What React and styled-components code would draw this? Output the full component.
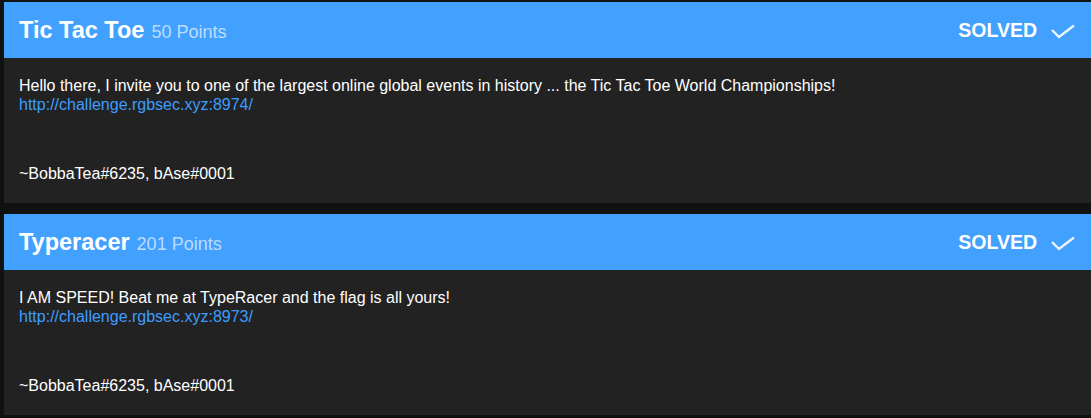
import React from 'react';
import styled, { createGlobalStyle } from 'styled-components';

const GlobalStyle = createGlobalStyle`
	body {
		margin: 0;
		background: #111111;
		font-family: "Liberation Sans", Arial, Helvetica, sans-serif;
	}
`;

const challenges = [
	{
		name: 'Tic Tac Toe',
		points: 50,
		description:
			'Hello there, I invite you to one of the largest online global events in history ... the Tic Tac Toe World Championships!',
		link: 'http://challenge.rgbsec.xyz:8974/',
		author: '~BobbaTea#6235, bAse#0001',
	},
	{
		name: 'Typeracer',
		points: 201,
		description: 'I AM SPEED! Beat me at TypeRacer and the flag is all yours!',
		link: 'http://challenge.rgbsec.xyz:8973/',
		author: '~BobbaTea#6235, bAse#0001',
	},
];

const Check = () => (
	<svg width="24" height="15" viewBox="0 0 24 15" fill="none">
		<polyline
			points="1,6 8,13 23,1.5"
			stroke="rgba(255,255,255,0.9)"
			strokeWidth="2.4"
			strokeLinejoin="miter"
		/>
	</svg>
);

const Challenge = ({ item }) => (
	<Card>
		<Header>
			<Title>
				{item.name}
				<Points>{item.points} Points</Points>
			</Title>
			<Status>
				SOLVED
				<Check />
			</Status>
		</Header>
		<Body>
			<Description>
				{item.description}
				<br />
				<a href={item.link}>{item.link}</a>
			</Description>
			<Author>{item.author}</Author>
		</Body>
	</Card>
);

const App = () => (
	<Page>
		<GlobalStyle />
		{challenges.map((c) => (
			<Challenge key={c.name} item={c} />
		))}
	</Page>
);

const Page = styled.div`
	display: flex;
	flex-direction: column;
	gap: 11px;
	padding: 2px 0 0 4px;
`;

const Card = styled.div`
	background: #222222;
`;

const Header = styled.div`
	display: flex;
	align-items: center;
	justify-content: space-between;
	height: 56px;
	padding: 0 16px 0 15px;
	background: #42a1ff;
	color: #fff;
`;

const Title = styled.h2`
	margin: 0;
	font-size: 23.5px;
	font-weight: 700;
`;

const Points = styled.span`
	margin-left: 7px;
	font-size: 18px;
	font-weight: 400;
	color: rgba(255, 255, 255, 0.65);
`;

const Status = styled.div`
	display: flex;
	align-items: center;
	gap: 14px;
	font-size: 19.5px;
	font-weight: 700;
	svg {
		margin-top: 2px;
	}
`;

const Body = styled.div`
	padding: 18px 15px 20px;
	color: #fff;
	font-size: 16px;
	line-height: 19px;
`;

const Description = styled.p`
	margin: 0;
	a {
		color: #3d9dff;
		text-decoration: none;
	}
`;

const Author = styled.p`
	margin: 50px 0 0;
`;

export default App;
